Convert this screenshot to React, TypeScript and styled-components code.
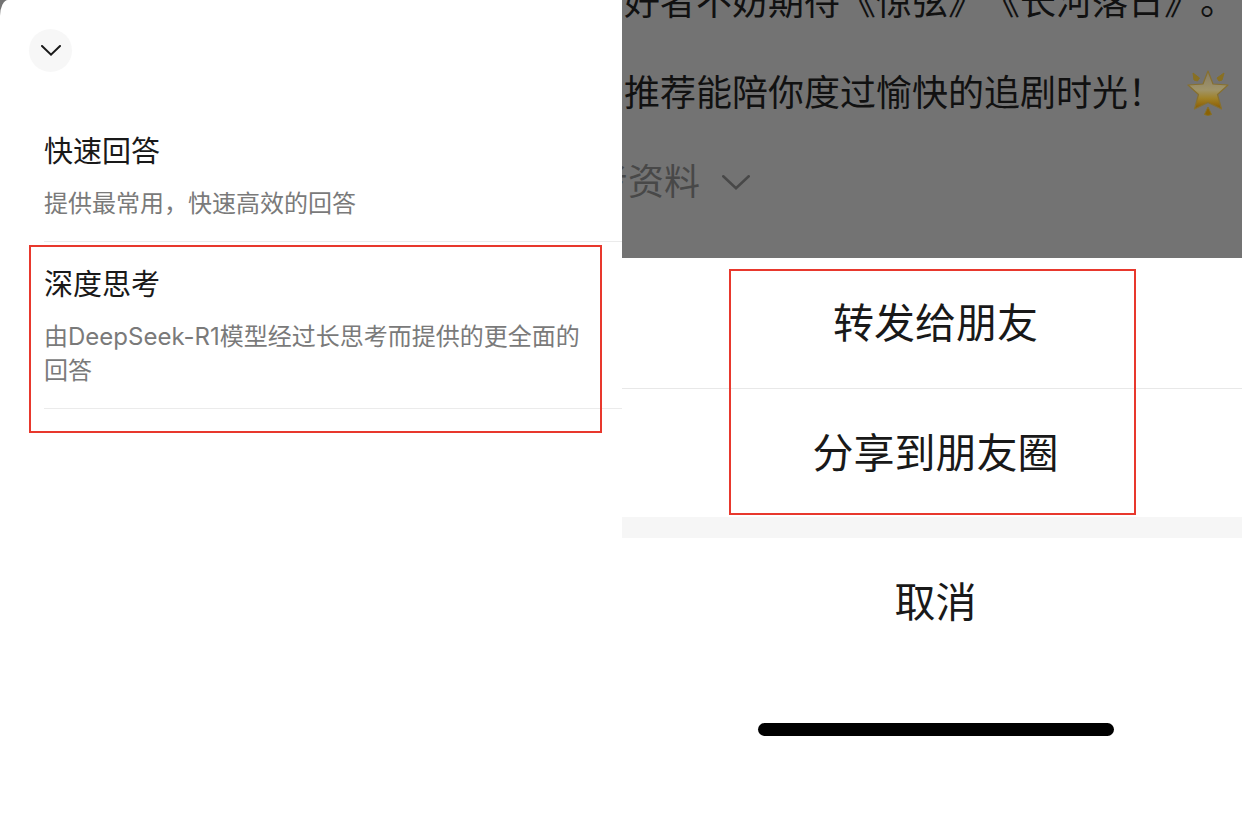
import React from "react";
import styled, { createGlobalStyle } from "styled-components";

const GlobalStyle = createGlobalStyle`
  * { box-sizing: border-box; }
  body {
    margin: 0;
    background: #fff;
    color: #191919;
    font-family: Inter, "Noto Sans CJK SC", sans-serif;
  }
  button {
    border: 0;
    padding: 0;
    font: inherit;
    color: inherit;
    cursor: pointer;
  }
  p, h2, ul { margin: 0; padding: 0; }
`;

const Page = styled.main`
  display: grid;
  grid-template-columns: 622fr 620fr;
  min-height: 100vh;
`;

const Backdrop = styled.section`
  background: #737373;
`;

const ModePanel = styled.div`
  height: 100%;
  background: #fff;
  border-top-left-radius: 8px 16px;
`;

const PanelHeader = styled.header`
  padding: 29px 29px 37px;
`;

const RoundButton = styled.button`
  display: flex;
  align-items: center;
  justify-content: center;
  width: 43px;
  height: 43px;
  border-radius: 50%;
  background: #f7f7f7;
`;

const ModeList = styled.ul`
  list-style: none;
`;

const ModeItem = styled.li`
  position: relative;
`;

const ModeButton = styled.button`
  display: flex;
  flex-direction: column;
  gap: 15px;
  width: calc(100% - 44px);
  margin-left: 44px;
  padding: 23px 20px 20px 0;
  border-bottom: 1px solid #ebebeb;
  background: none;
  text-align: left;
`;

const ModeTitle = styled.span`
  font-size: 29px;
  line-height: 40px;
`;

const ModeText = styled.span`
  font-size: 24px;
  line-height: 34px;
  color: #7a7a7a;
`;

const ModeHighlight = styled.div`
  position: absolute;
  inset: 3px 20px -24px 29px;
  border: 2px solid #e8382d;
  pointer-events: none;
`;

const SharePanel = styled.section`
  display: flex;
  flex-direction: column;
  min-width: 0;
  overflow: hidden;
`;

const DimmedChat = styled.div`
  display: flex;
  flex-direction: column;
  justify-content: flex-end;
  gap: 37px;
  height: 258px;
  padding-bottom: 50px;
  overflow: hidden;
  background: #737373;
  color: #111;
`;

const ChatLine = styled.p`
  display: flex;
  align-items: center;
  gap: 22px;
  font-size: 36px;
  line-height: 52px;
  white-space: nowrap;
  text-spacing-trim: space-all;
  padding-left: 2px;

  & + & {
    margin-top: 2px;
  }
`;

const SourceLink = styled.button`
  display: flex;
  align-items: center;
  gap: 22px;
  font-size: 36px;
  line-height: 52px;
  background: none;
  color: #484848;
`;

const SourceLabel = styled.span`
  display: flex;
  justify-content: flex-end;
  width: 78px;
  overflow: hidden;
  white-space: nowrap;
`;

const Sheet = styled.div`
  flex: 1;
  margin-right: -7px;
  background: #fff;
`;

const ShareGroup = styled.div`
  position: relative;
  border-bottom: 21px solid #f6f6f6;
`;

const SheetButton = styled.button<{ $divided?: boolean }>`
  display: block;
  width: 100%;
  height: ${(p) => (p.$divided ? 131 : 128)}px;
  border-bottom: ${(p) => (p.$divided ? "1px solid #e8e8e8" : "0")};
  background: #fff;
  font-size: 41px;
  line-height: 60px;
`;

const ShareHighlight = styled.div`
  position: absolute;
  inset: 11px 113px 2px 107px;
  border: 2px solid #e8382d;
  pointer-events: none;
`;

const HomeBar = styled.div`
  width: 356px;
  max-width: 80%;
  height: 13px;
  margin: 57px auto 0;
  border-radius: 7px;
  background: #000;
`;

function Chevron({ width, height, stroke }: { width: number; height: number; stroke: number }) {
  const s = stroke / 2;
  return (
    <svg width={width} height={height} viewBox={`0 0 ${width} ${height}`} fill="none" aria-hidden="true">
      <path
        d={`M${s} ${s} L${width / 2} ${height - stroke * 0.7} L${width - s} ${s}`}
        stroke="currentColor"
        strokeWidth={stroke}
        strokeLinecap="round"
      />
    </svg>
  );
}

function GlowingStar() {
  return (
    <svg width="44" height="48" viewBox="0 0 44 48" role="img" aria-label="star">
      <defs>
        <linearGradient id="starFill" x1="0" y1="0" x2="0" y2="1">
          <stop offset="0" stopColor="#857b66" />
          <stop offset="0.5" stopColor="#a09468" />
          <stop offset="0.72" stopColor="#a08228" />
          <stop offset="1" stopColor="#8a5900" />
        </linearGradient>
      </defs>
      <path
        d="M22 2 L27 15 L42 16 L31.5 25.5 L35.5 40 L22 33.5 L8.5 40 L12.5 25.5 L2 16 L17 15 Z"
        fill="url(#starFill)"
        stroke="#87702f"
        strokeWidth="1.2"
        strokeLinejoin="round"
      />
      <g fill="#897022" stroke="#897022" strokeLinejoin="round">
        <path d="M7 4 L13.5 9 L11.5 12 L8 11 Z" />
        <path d="M38 4 L31 9 L33 12 L36 11 Z" />
        <path d="M22 38 L25.5 45.5 L22 46.5 L18.5 45.5 Z" fill="#8b6204" />
      </g>
    </svg>
  );
}

export default function App() {
  return (
    <>
      <GlobalStyle />
      <Page lang="zh-CN">
        <Backdrop>
          <ModePanel>
            <PanelHeader>
              <RoundButton aria-label="收起">
                <Chevron width={20} height={11} stroke={2} />
              </RoundButton>
            </PanelHeader>
            <ModeList>
              <ModeItem>
                <ModeButton>
                  <ModeTitle>快速回答</ModeTitle>
                  <ModeText>提供最常用，快速高效的回答</ModeText>
                </ModeButton>
              </ModeItem>
              <ModeItem>
                <ModeButton>
                  <ModeTitle>深度思考</ModeTitle>
                  <ModeText>由DeepSeek-R1模型经过长思考而提供的更全面的回答</ModeText>
                </ModeButton>
                <ModeHighlight />
              </ModeItem>
            </ModeList>
          </ModePanel>
        </Backdrop>
        <SharePanel>
          <DimmedChat>
            <ChatLine>好者不妨期待《惊弦》《长河落日》。</ChatLine>
            <ChatLine>
              推荐能陪你度过愉快的追剧时光！
              <GlowingStar />
            </ChatLine>
            <SourceLink>
              <SourceLabel>考资料</SourceLabel>
              <Chevron width={28} height={15} stroke={2.5} />
            </SourceLink>
          </DimmedChat>
          <Sheet>
            <ShareGroup>
              <SheetButton $divided>转发给朋友</SheetButton>
              <SheetButton>分享到朋友圈</SheetButton>
              <ShareHighlight />
            </ShareGroup>
            <SheetButton>取消</SheetButton>
            <HomeBar />
          </Sheet>
        </SharePanel>
      </Page>
    </>
  );
}
